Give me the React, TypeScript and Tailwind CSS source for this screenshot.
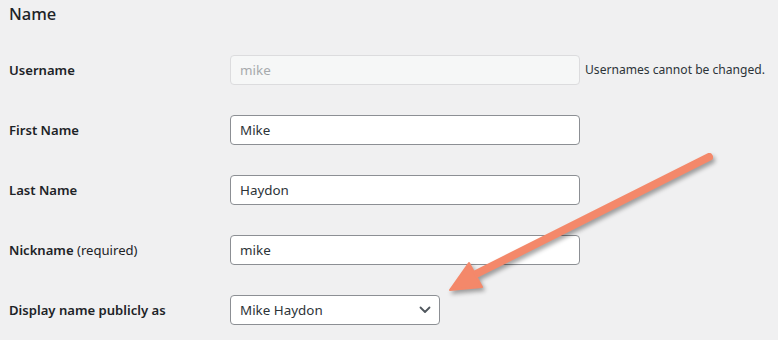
import React from 'react';

const font = { fontFamily: '"Noto Sans", "Open Sans", sans-serif' };

function Row({ label, note, children }: { label: React.ReactNode; note?: string; children: React.ReactNode }) {
  return (
    <div className="flex items-center h-[30px]">
      <div className="w-[230px] shrink-0 pl-[9px] pt-[1px] text-[13.1px] font-semibold text-[#1d2327]">{label}</div>
      {children}
      {note && <span className="ml-[5px] text-[12.1px] text-[#2c3338]">{note}</span>}
    </div>
  );
}

function TextBox({ value, disabled }: { value: string; disabled?: boolean }) {
  return (
    <input
      readOnly
      value={value}
      disabled={disabled}
      className={`w-[350px] h-[30px] px-[9px] rounded-[4px] border text-[13.4px] outline-none ${
        disabled ? 'bg-[#f6f7f7] border-[#dcdcde] text-[#a7aaad]' : 'bg-white border-[#8c8f94] text-[#2c3338]'
      }`}
      style={font}
    />
  );
}

export default function App() {
  return (
    <div className="relative w-[778px] h-[340px] bg-[#f0f0f1] overflow-hidden" style={font}>
      <h2 className="pl-[9px] pt-[3px] text-[16.5px] font-medium text-[#1d2327] leading-[22px]">Name</h2>

      <div className="mt-[30px] flex flex-col gap-[30px]">
        <Row label="Username" note="Usernames cannot be changed.">
          <TextBox value="mike" disabled />
        </Row>
        <Row label="First Name">
          <TextBox value="Mike" />
        </Row>
        <Row label="Last Name">
          <TextBox value="Haydon" />
        </Row>
        <Row
          label={
            <>
              Nickname <span className="font-normal">(required)</span>
            </>
          }
        >
          <TextBox value="mike" />
        </Row>
        <Row label="Display name publicly as">
          <div className="flex items-center justify-between w-[210px] h-[30px] pl-[9px] pr-[8px] rounded-[4px] border border-[#8c8f94] bg-white text-[13.4px] text-[#2c3338]">
            <span>Mike Haydon</span>
            <svg width="12" height="8" viewBox="0 0 12 8" fill="none">
              <path d="M1.5 1.5 L6 6 L10.5 1.5" stroke="#50575e" strokeWidth="1.8" strokeLinecap="round" strokeLinejoin="round" />
            </svg>
          </div>
        </Row>
      </div>

      {/* annotation arrow */}
      <svg
        className="absolute left-0 top-0 drop-shadow-[2px_3px_2px_rgba(0,0,0,0.35)]"
        width="778"
        height="340"
        viewBox="0 0 778 340"
      >
        <line x1="709" y1="157" x2="472" y2="276" stroke="#f4886a" strokeWidth="8" strokeLinecap="round" />
        <polygon points="450,290 469,263 482,287" fill="#f4886a" stroke="#f4886a" strokeWidth="2" strokeLinejoin="round" />
      </svg>
    </div>
  );
}
